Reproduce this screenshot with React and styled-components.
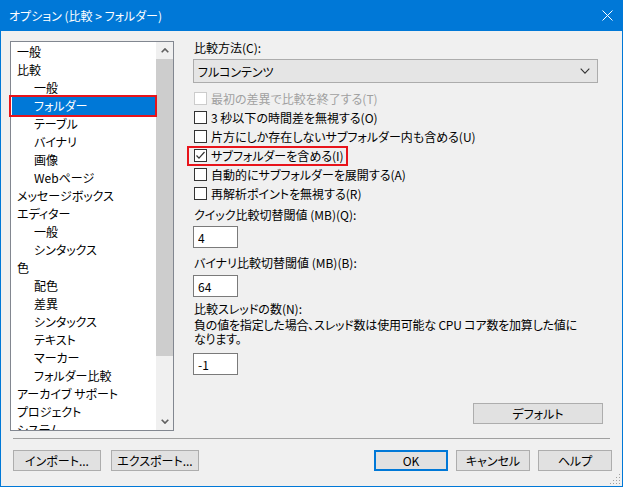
import React from "react";
import styled, { createGlobalStyle } from "styled-components";

const GlobalStyle = createGlobalStyle`
  html, body {
    margin: 0;
    padding: 0;
    background: #f0f0f0;
  }
  body {
    font-family: "Noto Sans CJK JP", "Noto Sans", sans-serif;
    font-size: 12px;
    color: #000;
  }
  * {
    box-sizing: border-box;
  }
`;

const ROW_H = 18;

// Window frame
const Window = styled.div`
  position: relative;
  width: 623px;
  height: 487px;
  border: 1px solid #0078d7;
  border-top: none;
  background: #f0f0f0;
  display: flex;
  flex-direction: column;
  font-feature-settings: "palt";
`;

const TitleBar = styled.div`
  height: 31px;
  flex-shrink: 0;
  background: #0078d7;
  color: #fff;
  display: flex;
  align-items: center;
  justify-content: space-between;
  padding-left: 8px;
  line-height: 14px;
`;

const CloseButton = styled.div`
  width: 30px;
  height: 31px;
  display: flex;
  align-items: center;
  justify-content: center;
`;

const Body = styled.div`
  flex: 1;
  display: flex;
  flex-direction: column;
  padding: 10px 10px 0 9px;
`;

const Main = styled.div`
  display: flex;
  height: 390px;
`;

// Tree on the left
const TreeBox = styled.div`
  position: relative;
  width: 164px;
  height: 390px;
  border: 1px solid #828790;
  background: #fff;
  display: flex;
`;

const TreeList = styled.div`
  flex: 1;
  overflow: hidden;
  padding-top: 1px;
`;

const TreeItem = styled.div`
  height: ${ROW_H}px;
  line-height: ${ROW_H}px;
  margin-left: 1px;
  padding-left: ${(p) => (p.$level ? 22 : 5)}px;
  white-space: nowrap;
  background: ${(p) => (p.$selected ? "#0078d7" : "transparent")};
  color: ${(p) => (p.$selected ? "#fff" : "#000")};
`;

const Marker = styled.div`
  position: absolute;
  left: -2px;
  width: 148px;
  height: ${ROW_H + 4}px;
  border: 2px solid #e8141b;
  pointer-events: none;
`;

const Scrollbar = styled.div`
  width: 17px;
  background: #f0f0f0;
  display: flex;
  flex-direction: column;
`;

const ScrollArrow = styled.div`
  height: 17px;
  display: flex;
  align-items: center;
  justify-content: center;
`;

const Thumb = styled.div`
  height: 297px;
  background: #cdcdcd;
`;

const ScrollTrack = styled.div`
  flex: 1;
`;

// Right side
const Panel = styled.div`
  margin-left: 19px;
  width: 409px;
  display: flex;
  flex-direction: column;
`;

const Label = styled.div`
  line-height: 14px;
  height: 14px;
  margin-top: ${(p) => p.$top || 0}px;
  padding-left: 1px;
  white-space: nowrap;
`;

const Note = styled.div`
  margin-top: 2px;
  padding-left: 1px;
  line-height: 14px;
  white-space: nowrap;
  letter-spacing: -0.2px;
`;

const Combo = styled.div`
  margin-top: 4px;
  width: 405px;
  height: 24px;
  background: #e5e5e5;
  border: 1px solid #acacac;
  display: flex;
  align-items: center;
  justify-content: space-between;
  padding: 0 7px 0 4px;
`;

const CheckList = styled.div`
  margin-top: 6px;
  display: flex;
  flex-direction: column;
  align-items: flex-start;
`;

const CheckRow = styled.div`
  position: relative;
  height: 19px;
  display: flex;
  align-items: center;
  gap: 4px;
  padding-left: 1px;
  white-space: nowrap;
  color: ${(p) => (p.$disabled ? "#a0a0a0" : "#000")};

  ${(p) =>
    p.$marked &&
    `
    &::after {
      content: "";
      position: absolute;
      top: 0;
      bottom: -1px;
      left: -6px;
      right: -4px;
      border: 2px solid #e8141b;
    }
  `}
`;

const Box = styled.span`
  width: 13px;
  height: 13px;
  flex-shrink: 0;
  border: 1px solid ${(p) => (p.$disabled ? "#cccccc" : "#333333")};
  background: #fff;
  display: flex;
  align-items: center;
  justify-content: center;
`;

const NumberField = styled.input`
  margin-top: ${(p) => p.$top}px;
  width: 45px;
  height: 22px;
  border: 1px solid #7a7a7a;
  background: #fff;
  padding: 0 0 0 4px;
  font: inherit;
  color: #000;
  outline: none;
`;

const Button = styled.button`
  width: ${(p) => p.$w}px;
  height: 21px;
  padding: 0;
  background: #e1e1e1;
  border: ${(p) => (p.$primary ? "2px solid #0078d7" : "1px solid #adadad")};
  font: inherit;
  font-feature-settings: "palt";
  color: #000;
  line-height: 14px;
`;

const DefaultButton = styled(Button)`
  margin-top: auto;
  margin-bottom: 7px;
  margin-right: -1px;
  align-self: flex-end;
`;

const Separator = styled.div`
  margin: 7px 2px 0 3px;
  height: 1px;
  background: #a0a0a0;
`;

const ButtonRow = styled.div`
  margin-top: 11px;
  padding-left: 3px;
  display: flex;
  justify-content: space-between;
`;

const ButtonGroup = styled.div`
  display: flex;
  gap: ${(p) => p.$gap}px;
`;

const Grip = styled.svg`
  position: absolute;
  right: 1px;
  bottom: 1px;
`;

const treeItems = [
  ["一般", 0],
  ["比較", 0],
  ["一般", 1],
  ["フォルダー", 1],
  ["テーブル", 1],
  ["バイナリ", 1],
  ["画像", 1],
  ["Webページ", 1],
  ["メッセージボックス", 0],
  ["エディター", 0],
  ["一般", 1],
  ["シンタックス", 1],
  ["色", 0],
  ["配色", 1],
  ["差異", 1],
  ["シンタックス", 1],
  ["テキスト", 1],
  ["マーカー", 1],
  ["フォルダー比較", 1],
  ["アーカイブ サポート", 0],
  ["プロジェクト", 0],
  ["システム", 0],
];

const checks = [
  { label: "最初の差異で比較を終了する(T)", disabled: true },
  { label: "3 秒以下の時間差を無視する(O)" },
  { label: "片方にしか存在しないサブフォルダー内も含める(U)" },
  { label: "サブフォルダーを含める(I)", checked: true, marked: true },
  { label: "自動的にサブフォルダーを展開する(A)" },
  { label: "再解析ポイントを無視する(R)" },
];

const Chevron = ({ up, color = "#606060", w = 8, h = 5, sw = 1.6 }) => (
  <svg width={w} height={h} viewBox={`0 0 ${w} ${h}`}>
    <polyline
      points={
        up
          ? `0.7,${h - 0.7} ${w / 2},0.9 ${w - 0.7},${h - 0.7}`
          : `0.7,0.7 ${w / 2},${h - 0.9} ${w - 0.7},0.7`
      }
      fill="none"
      stroke={color}
      strokeWidth={sw}
    />
  </svg>
);

const App = () => {
  const selected = 3;

  return (
    <>
      <GlobalStyle />
      <Window>
        <TitleBar>
          <span>オプション (比較 &gt; フォルダー)</span>
          <CloseButton>
            <svg width="11" height="11" viewBox="0 0 11 11">
              <path d="M0.5 0.5 L10.5 10.5 M10.5 0.5 L0.5 10.5" stroke="#fff" strokeWidth="1" />
            </svg>
          </CloseButton>
        </TitleBar>
        <Body>
          <Main>
            <TreeBox>
              <TreeList>
                {treeItems.map(([text, level], i) => (
                  <TreeItem key={i} $level={level} $selected={i === selected}>
                    {text}
                  </TreeItem>
                ))}
              </TreeList>
              <Scrollbar>
                <ScrollArrow>
                  <Chevron up />
                </ScrollArrow>
                <Thumb />
                <ScrollTrack />
                <ScrollArrow>
                  <Chevron />
                </ScrollArrow>
              </Scrollbar>
              <Marker style={{ top: 1 + selected * ROW_H - 2 }} />
            </TreeBox>

            <Panel>
              <Label>比較方法(C):</Label>
              <Combo>
                <span>フルコンテンツ</span>
                <Chevron color="#333" w={10} h={6} sw={1.1} />
              </Combo>
              <CheckList>
                {checks.map((c) => (
                  <CheckRow key={c.label} $disabled={c.disabled} $marked={c.marked}>
                    <Box $disabled={c.disabled}>
                      {c.checked && (
                        <svg width="11" height="11" viewBox="0 0 11 11">
                          <polyline
                            points="1.5,5.5 4,8.2 9.5,2"
                            fill="none"
                            stroke="#333"
                            strokeWidth="1.2"
                          />
                        </svg>
                      )}
                    </Box>
                    <span>{c.label}</span>
                  </CheckRow>
                ))}
              </CheckList>

              <Label $top={5}>クイック比較切替閾値 (MB)(Q):</Label>
              <NumberField $top={4} readOnly value="4" />

              <Label $top={8}>バイナリ比較切替閾値 (MB)(B):</Label>
              <NumberField $top={5} readOnly value="64" />

              <Label $top={5}>比較スレッドの数(N):</Label>
              <Note>
                負の値を指定した場合、スレッド数は使用可能な CPU コア数を加算した値に
                <br />
                なります。
              </Note>
              <NumberField $top={7} readOnly value="-1" />

              <DefaultButton $w={130}>デフォルト</DefaultButton>
            </Panel>
          </Main>

          <Separator />

          <ButtonRow>
            <ButtonGroup $gap={10}>
              <Button $w={88}>インポート...</Button>
              <Button $w={88}>エクスポート...</Button>
            </ButtonGroup>
            <ButtonGroup $gap={8}>
              <Button $w={74} $primary>
                OK
              </Button>
              <Button $w={74}>キャンセル</Button>
              <Button $w={74}>ヘルプ</Button>
            </ButtonGroup>
          </ButtonRow>
        </Body>
        <Grip width="12" height="12" viewBox="0 0 12 12">
          {[
            [10, 2], [10, 5], [7, 5], [10, 8], [7, 8], [4, 8],
            [10, 11], [7, 11], [4, 11], [1, 11],
          ].map(([x, y], i) => (
            <rect key={i} x={x} y={y - 1} width="1" height="1" fill="#a0a0a0" />
          ))}
        </Grip>
      </Window>
    </>
  );
};

export default App;
